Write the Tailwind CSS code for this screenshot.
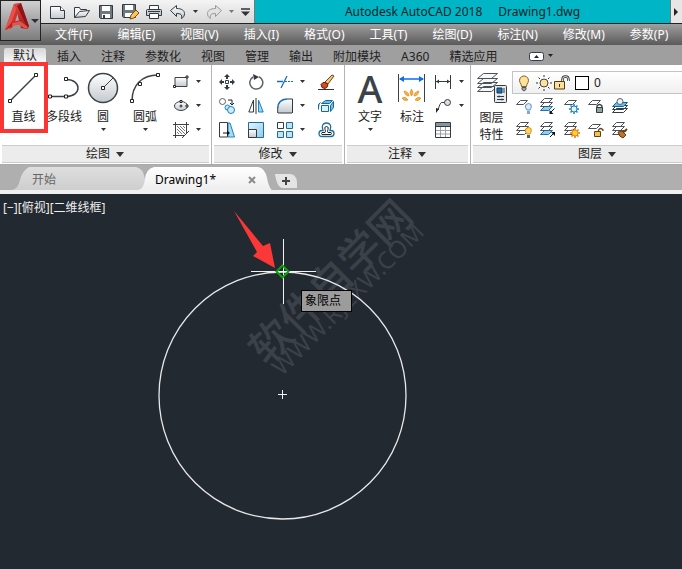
<!DOCTYPE html>
<html lang="zh-CN">
<head>
  <meta charset="UTF-8" />
  <meta name="viewport" content="width=device-width, initial-scale=1.0" />
  <title>Autodesk AutoCAD 2018 - Drawing1.dwg</title>
  <script src="https://cdn.jsdelivr.net/npm/@tailwindcss/browser@4"></script>
</head>
<body class="min-h-screen flex flex-col overflow-x-hidden bg-[#222930] font-['Noto_Sans','Noto_Sans_CJK_SC',sans-serif] text-xs leading-4 text-[#222] whitespace-nowrap">
  <!-- Shared gradients -->
  <svg class="absolute w-0 h-0" aria-hidden="true">
    <defs>
      <linearGradient id="steel" x1="0" y1="0" x2="0" y2="1"><stop offset="0" stop-color="#fff" /><stop offset="1" stop-color="#c3c9cf" /></linearGradient>
      <linearGradient id="sky" x1="0" y1="0" x2="1" y2="1"><stop offset="0" stop-color="#e4f5fc" /><stop offset="1" stop-color="#8ecbe8" /></linearGradient>
      <linearGradient id="red" x1="0" y1="0" x2="0" y2="1"><stop offset="0" stop-color="#e0453f" /><stop offset="1" stop-color="#a3181b" /></linearGradient>
      <linearGradient id="tab" x1="0" y1="0" x2="0" y2="1"><stop offset="0" stop-color="#dedede" /><stop offset="1" stop-color="#cecece" /></linearGradient>
      <linearGradient id="tabOn" x1="0" y1="0" x2="0" y2="1"><stop offset="0" stop-color="#fff" /><stop offset="1" stop-color="#eee" /></linearGradient>
    </defs>
  </svg>

  <!-- Title bar and menus -->
  <header class="flex h-[45px] bg-linear-to-b from-[#e8e8e8] from-50% via-[#9a9a9a] via-60% to-[#5c5c5c]">
    <button aria-label="应用程序菜单" class="w-[41px] h-[41px] shrink-0 flex items-center border border-[#222] bg-linear-to-b from-[#d0d0d0] to-[#7d7d7d]">
      <svg width="39" height="39" viewBox="0 0 39 39">
        <path d="M13 3l7-1-6 19-3 6-7 2z" fill="#d3322f" />
        <path d="M13 3L4 29l4-1 8-22z" fill="#e5524c" />
        <path d="M13 3l7-1 8 24-2 2-6-1-5-19z" fill="url(#red)" />
        <path d="M20 2l8 23-2 1L16 5z" fill="#8e1517" />
        <path d="M4 29l7-8 9-2 1 4-8 1z" fill="#b9211f" />
        <path d="M11 22l8-2 8 6-2 2-7-4-7 1z" fill="#e0524c" />
        <path d="M30 18h8l-4 4z" fill="#2b3138" />
      </svg>
    </button>
    <div class="flex-1 min-w-0 flex flex-col">
      <div class="flex h-6 border-b border-[#222] bg-[#00b6c6]">
        <div class="flex items-center w-[214px] shrink-0 border-r border-[#777] bg-linear-to-b from-[#f4f4f4] to-[#d8d8d8] pl-2">
          <button aria-label="新建" class="w-6"><svg width="18" height="16" viewBox="0 0 18 16"><path d="M1.500 2.500h10l4 4v8h-14z" fill="url(#steel)" stroke="#333b42" /><path d="M11.500 2.500v4h4" fill="#fff" stroke="#333b42" /></svg></button>
          <button aria-label="打开" class="w-6"><svg width="18" height="16" viewBox="0 0 18 16"><path d="M1.500 13.500v-10h5l1 2h6v3" fill="#f6f6f6" stroke="#333b42" /><path d="M1.500 13.500l5-6 10-1-4 6z" fill="url(#steel)" stroke="#333b42" /></svg></button>
          <button aria-label="保存" class="w-6"><svg width="18" height="16" viewBox="0 0 18 16"><path d="M2.500 1.500h13v13h-12l-1-1z" fill="#6d7880" stroke="#333b42" /><path d="M5 2h8v5H5z" fill="#fff" /><path d="M5 10h8v4H5z" fill="#fff" /><path d="M6 11h2v3H6z" fill="#333b42" /></svg></button>
          <button aria-label="另存为" class="w-6"><svg width="18" height="17" viewBox="0 0 18 17"><path d="M1.500 1.500h13v13h-12l-1-1z" fill="#6d7880" stroke="#333b42" /><path d="M4 2h8v5H4zM4 10h8v4H4z" fill="#fff" /><path d="M9 16l1-4 5-5 3 3-5 5z" fill="#ffc44a" stroke="#7a4a18" /></svg></button>
          <button aria-label="打印" class="w-6"><svg width="18" height="16" viewBox="0 0 18 16"><path d="M4.500 6v-4.500h9V6" fill="#fff" stroke="#333b42" /><path d="M1.500 6.500q0-1 1-1h13q1 0 1 1v5h-15z" fill="#c8ced3" stroke="#333b42" /><path d="M4.500 9.500h9v5h-9z" fill="#fff" stroke="#333b42" /><path d="M3 7.500h12" stroke="#333b42" /></svg></button>
          <button aria-label="放弃" class="w-6"><svg width="18" height="16" viewBox="0 0 18 16"><path d="M1.500 6.500l6-5v3c5 0 8 2 8 5 0 2-1 4-3 5 1-4-1-5-5-5v3z" fill="url(#steel)" stroke="#333b42" /></svg></button>
          <button aria-label="放弃列表" class="w-3"><svg width="5" height="4"><path d="M0 0h5L2.500 3z" fill="#333" /></svg></button>
          <button aria-label="重做" class="w-6"><svg width="18" height="16" viewBox="0 0 18 16"><path d="M16.500 6.500l-6-5v3c-5 0-8 2-8 5 0 2 1 4 3 5-1-4 1-5 5-5v3z" fill="#e2e2e2" stroke="#999" /></svg></button>
          <button aria-label="重做列表" class="w-3"><svg width="5" height="4"><path d="M0 0h5L2.500 3z" fill="#777" /></svg></button>
          <button aria-label="自定义"><svg width="9" height="8"><path d="M0 1h9" stroke="#333" stroke-width="1.500" /><path d="M0 3.500h9L4.500 8z" fill="#333" /></svg></button>
        </div>
        <h1 class="flex-1 flex justify-center items-center gap-4 text-xs text-[#0d1f24]"><span>Autodesk AutoCAD 2018</span><span>Drawing1.dwg</span></h1>
        <button aria-label="更多" class="w-3 flex items-center justify-center border-l border-[#777] bg-[#e6e6e6]"><svg width="5" height="8"><path d="M0 0l4 4-4 4z" fill="#222" /></svg></button>
      </div>
      <nav class="flex items-center gap-[25px] h-[21px] pl-[14px] bg-linear-to-b from-[#a0a0a0] to-[#5a5a5a] text-white">
        <a href="#">文件(F)</a>
        <a href="#">编辑(E)</a>
        <a href="#">视图(V)</a>
        <a href="#">插入(I)</a>
        <a href="#">格式(O)</a>
        <a href="#">工具(T)</a>
        <a href="#">绘图(D)</a>
        <a href="#">标注(N)</a>
        <a href="#">修改(M)</a>
        <a href="#">参数(P)</a>
      </nav>
    </div>
  </header>

  <!-- Ribbon tabs -->
  <nav class="flex items-end h-5 gap-5 bg-[#9f9f9f] pl-1">
    <a href="#" class="w-[42px] h-[17px] -mr-[9px] rounded-t-xs bg-linear-to-b from-[#d6d6d6] to-white text-center">默认</a>
    <a href="#">插入</a>
    <a href="#">注释</a>
    <a href="#">参数化</a>
    <a href="#">视图</a>
    <a href="#">管理</a>
    <a href="#">输出</a>
    <a href="#">附加模块</a>
    <a href="#">A360</a>
    <a href="#">精选应用</a>
    <button aria-label="最小化功能区" class="flex items-center gap-1 h-[18px] ml-3">
      <svg width="15" height="9" viewBox="0 0 15 9"><rect x=".5" y=".5" width="14" height="8" rx="2" fill="#fff" stroke="#333b55" /><path d="M5 6h5L7.500 3z" fill="#222" /></svg>
      <svg width="5" height="4"><path d="M0 0h5L2.500 3z" fill="#222" /></svg>
    </button>
  </nav>

  <!-- Ribbon -->
  <main class="flex-1 flex flex-col">
    <div class="flex h-[100px] bg-white border-b border-[#aaa]">
      <!-- Draw -->
      <section class="w-[212px] shrink-0 flex flex-col border-r border-[#b4b4b4]">
        <div class="flex h-20">
          <button class="relative w-[47px] shrink-0 flex flex-col items-center pt-[7px] z-10">
            <span class="absolute left-0 -top-[3px] w-12 h-[71px] border-4 border-[#fb3434] bg-white"></span>
            <svg class="relative" width="32" height="32" viewBox="0 0 32 32"><path d="M2 29L28 3" stroke="#3b4248" stroke-width="1.500" /><path d="M.5 27.500h3v3h-3zM26.500 1.500h3v3h-3z" fill="#fff" stroke="#222" /></svg>
            <span class="relative mt-[5px]">直线</span>
          </button>
          <button class="w-[34px] shrink-0 flex flex-col items-center pt-[7px]">
            <svg width="32" height="32" viewBox="0 0 32 32"><path d="M2 24.500h16c16 0 16-17 0-17" fill="none" stroke="#3b4248" stroke-width="1.500" /><path d="M.5 23h3v3h-3zM16.500 23h3v3h-3zM16.500 5.500h3v3h-3z" fill="#fff" stroke="#222" /></svg>
            <span class="mt-[5px]">多段线</span>
          </button>
          <button class="w-11 shrink-0 flex flex-col items-center pt-[7px]">
            <svg width="32" height="32" viewBox="0 0 32 32"><circle cx="16" cy="16" r="14.500" fill="url(#steel)" stroke="#3b4248" stroke-width="1.500" /><path d="M16 16L26 6" stroke="#3b4248" /><path d="M14.500 14.500h3v3h-3z" fill="#fff" stroke="#222" /></svg>
            <span class="mt-[5px]">圆</span>
            <svg class="mt-[3px]" width="5" height="4"><path d="M0 0h5L2.500 3z" fill="#333" /></svg>
          </button>
          <button class="w-10 shrink-0 flex flex-col items-center pt-[7px]">
            <svg width="32" height="32" viewBox="0 0 32 32"><path d="M3 29C3 13 13 3 29 3" fill="none" stroke="#3b4248" stroke-width="1.500" /><path d="M1.500 27.500h3v3h-3zM9.500 10.500h3v3h-3zM27.500 1.500h3v3h-3z" fill="#fff" stroke="#222" /></svg>
            <span class="mt-[5px]">圆弧</span>
            <svg class="mt-[3px]" width="5" height="4"><path d="M0 0h5L2.500 3z" fill="#333" /></svg>
          </button>
          <div class="grid grid-cols-[16px_5px] auto-rows-[24px] gap-x-[7px] items-center pt-[5px] pl-2">
            <button aria-label="矩形"><svg width="16" height="16" viewBox="0 0 16 16"><path d="M2 3.500h12v9H2z" fill="url(#steel)" stroke="#3b4248" /><path d="M.5 11.500h2v2h-2zM13 2h2v2h-2z" fill="#fff" stroke="#222" /></svg></button>
            <svg width="5" height="4"><path d="M0 0h5L2.500 3z" fill="#333" /></svg>
            <button aria-label="椭圆"><svg width="16" height="16" viewBox="0 0 16 16"><ellipse cx="8" cy="8" rx="6.500" ry="4.500" fill="url(#steel)" stroke="#3b4248" /><path d="M6.500 8h3M8 6.500v3" stroke="#222" /><path d="M7 2.500h2v2H7zM13 7h2v2h-2z" fill="#fff" stroke="#222" /></svg></button>
            <svg width="5" height="4"><path d="M0 0h5L2.500 3z" fill="#333" /></svg>
            <button aria-label="图案填充"><svg width="16" height="16" viewBox="0 0 16 16"><path d="M0 2.500h16M0 13.500h12M2.500 0v16M13.500 0v12M9 16l7-7" stroke="#3b4248" /><path d="M4 4l8 8M7 4l5 5M4 7l5 5M10 4l2 2M4 10l2 2" stroke="#777" /></svg></button>
            <svg width="5" height="4"><path d="M0 0h5L2.500 3z" fill="#333" /></svg>
          </div>
        </div>
        <button class="flex items-center justify-center gap-[6px] h-[18px] mx-[2px] border-y border-[#ccc] bg-[#ececec]">绘图 <svg width="9" height="5"><path d="M0 0h8L4 5z" fill="#333" /></svg></button>
      </section>

      <!-- Modify -->
      <section class="w-[133px] shrink-0 flex flex-col border-r border-[#b4b4b4]">
        <div class="h-20 grid grid-cols-[29px_29px_23px_18px_18px] auto-rows-[24px] items-center content-start pl-[7px] pt-[5px]">
          <button aria-label="移动"><svg width="16" height="16" viewBox="0 0 16 16"><path d="M8 0l3 3H9v2H7V3H5zM8 16l3-3H9v-2H7v2H5zM0 8l3-3v2h2v2H3v2zM16 8l-3-3v2h-2v2h2v2z" fill="#333b42" /><path d="M6.500 6.500h3v3h-3z" fill="#fff" stroke="#333b42" /></svg></button>
          <button aria-label="旋转"><svg width="16" height="16" viewBox="0 0 16 16"><path d="M5 3a6.500 6.500 0 1 0 6-.3" fill="none" stroke="#59636b" stroke-width="1.500" /><path d="M5 0l6 3-5 3z" fill="#333b42" /></svg></button>
          <button aria-label="修剪"><svg width="17" height="16" viewBox="0 0 17 16"><path d="M0 7.500h6M4 14L10 2" stroke="#1870b0" stroke-width="1.300" fill="none" /><path d="M8 7.500h2M11 7.500h2M14 7.500h2" stroke="#1870b0" /></svg></button>
          <svg width="5" height="4"><path d="M0 0h5L2.500 3z" fill="#333" /></svg>
          <button aria-label="删除"><svg width="17" height="16" viewBox="0 0 17 16"><path d="M0 15.500h16" stroke="#333" /><path d="M7 8l7-7 2 1-6 8z" fill="#f0c878" stroke="#6e4720" /><path d="M3 10.500q2-3 4-2l3 2q0 3-3 4-4 0-4-4z" fill="#cf4d24" stroke="#6a1d0a" /></svg></button>
          <button aria-label="复制"><svg width="16" height="16" viewBox="0 0 16 16"><circle cx="3.500" cy="3.500" r="3" fill="#fff" stroke="#59636b" /><path d="M9 2h4v4M11 5l2 2 2-2" fill="none" stroke="#222" /><circle cx="8.500" cy="9.500" r="2.500" fill="#cfe9f6" stroke="#1b83bd" /><circle cx="12" cy="12" r="3.500" fill="#cfe9f6" stroke="#1b83bd" /></svg></button>
          <button aria-label="镜像"><svg width="16" height="16" viewBox="0 0 16 16"><path d="M5.500 2v12H.8z" fill="#fff" stroke="#333b42" /><path d="M8 0v16" stroke="#333" /><path d="M10.500 2v12h4.700z" fill="#9fd3ee" stroke="#1b83bd" /></svg></button>
          <button aria-label="圆角"><svg width="17" height="16" viewBox="0 0 17 16"><path d="M1 15V9q1-7 9-8h5v14z" fill="url(#steel)" /><path d="M.7 15V9M15.500 15V1H10" fill="none" stroke="#333b42" /><path d="M.8 10Q1 1.500 10 1" fill="none" stroke="#1870b0" stroke-width="1.500" /><path d="M1 15h14" stroke="#333b42" /></svg></button>
          <svg width="5" height="4"><path d="M0 0h5L2.500 3z" fill="#333" /></svg>
          <button aria-label="分解"><svg width="17" height="16" viewBox="0 0 17 16"><path d="M3.500 7.500h7v6h-7z" fill="#d9f1fb" stroke="#146a9c" /><path d="M3.500 5.500l4-3h7l-3 3zM12.500 7.500l3-4v6l-3 4zM.5 11.500v-5l2-2" fill="#6fc0e6" stroke="#146a9c" /></svg></button>
          <button aria-label="拉伸"><svg width="16" height="16" viewBox="0 0 16 16"><path d="M9 1l2 0 4.500 14H9z" fill="#a9dcf2" stroke="#1b83bd" /><path d="M.5.5h8v14.500h-8z" fill="#fff" stroke="#333b42" /><path d="M4 11h5" stroke="#111" /><path d="M8 8.500l3 2.500-3 2.500z" fill="#111" /></svg></button>
          <button aria-label="缩放"><svg width="16" height="16" viewBox="0 0 16 16"><path d="M.5.5h15v15H.5z" fill="url(#sky)" stroke="#1b6f9f" /><path d="M.5 7.500h8v8h-8z" fill="url(#steel)" stroke="#333b42" /></svg></button>
          <button aria-label="阵列"><svg width="17" height="16" viewBox="0 0 17 16"><path d="M.5.5h6v6h-6z" fill="#fff" stroke="#333b42" /><path d="M9.500.5h6v6h-6zM.5 9.500h6v6h-6zM9.500 9.500h6v6h-6z" fill="#bfe4f5" stroke="#1b6f9f" /></svg></button>
          <svg width="5" height="4"><path d="M0 0h5L2.500 3z" fill="#333" /></svg>
          <button aria-label="偏移"><svg width="17" height="16" viewBox="0 0 17 16"><path d="M5 8.500C3 4 5 1 8.500 1S14 4 12 8.500h1q3 0 3 3t-3 3H4q-3 0-3-3t3-3z" fill="#fff" stroke="#1b6f9f" stroke-width="1.300" /><path d="M7 10.500q1-1 0-3-1-3 1.500-3t1.500 3q-1 2 0 3h3q1 1 0 2H4q-1-1 0-2z" fill="none" stroke="#222" /></svg></button>
        </div>
        <button class="flex items-center justify-center gap-[6px] h-[18px] mx-[2px] border-y border-[#ccc] bg-[#ececec]">修改 <svg width="9" height="5"><path d="M0 0h8L4 5z" fill="#333" /></svg></button>
      </section>

      <!-- Annotate -->
      <section class="w-[126px] shrink-0 flex flex-col border-r border-[#b4b4b4]">
        <div class="flex h-20 pl-1">
          <button class="w-[42px] flex flex-col items-center pt-[7px]">
            <span class="h-8 text-[38px] leading-8 font-medium text-[#3b4248]" aria-hidden="true">A</span>
            <span class="mt-[5px]">文字</span>
            <svg class="mt-[3px]" width="5" height="4"><path d="M0 0h5L2.500 3z" fill="#333" /></svg>
          </button>
          <button class="w-[42px] flex flex-col items-center pt-[7px]">
            <svg width="32" height="32" viewBox="0 0 32 32"><path d="M2.500 2v28M28.500 2v28" stroke="#3b4248" /><path d="M4 7h23" stroke="#0b6df0" stroke-width="1.500" /><path d="M3 7l5-3v6zM28 7l-5-3v6z" fill="#0b6df0" /><path d="M15.500 17q3 4 0 7-3-3 0-7zM8 19q5 1 5 5-4 0-5-5zM23 19q-5 1-5 5 4 0 5-5zM6 26q4-2 6 2-4 2-6-2zM25 26q-4-2-6 2 4 2 6-2z" fill="#f5b53c" stroke="#e27e10" stroke-width=".6" /></svg>
            <span class="mt-[5px]">标注</span>
          </button>
          <div class="grid grid-cols-[16px_5px] auto-rows-[24px] items-center content-start gap-x-2 pl-[2px] pt-[5px]">
            <button aria-label="线性"><svg width="16" height="16" viewBox="0 0 16 16"><path d="M.5 1v14M15.500 1v14M1 7.500h14" stroke="#333b42" /><path d="M1 7.500l3-2v4zM15 7.500l-3-2v4z" fill="#333b42" /></svg></button>
            <svg width="5" height="4"><path d="M0 0h5L2.500 3z" fill="#333" /></svg>
            <button aria-label="引线"><svg width="16" height="16" viewBox="0 0 16 16"><circle cx="12.500" cy="4.500" r="3" fill="#dde1e4" stroke="#333b42" /><path d="M9.500 4.500h-3Q5 5 3 12" fill="none" stroke="#333b42" /><path d="M1 15V10l3 1z" fill="#222" /></svg></button>
            <svg width="5" height="4"><path d="M0 0h5L2.500 3z" fill="#333" /></svg>
            <button aria-label="表格"><svg width="16" height="16" viewBox="0 0 16 16"><path d="M.5.5h15v15H.5z" fill="#fff" stroke="#333b42" /><path d="M1 1h14v3H1z" fill="#8b949b" /><path d="M1 4.500h14" stroke="#333b42" /><path d="M5.500 5v10M10.500 5v10M1 8.500h14M1 12h14" stroke="#9aa1a7" /></svg></button>
          </div>
        </div>
        <button class="flex items-center justify-center gap-[6px] h-[18px] mx-[2px] border-y border-[#ccc] bg-[#ececec]">注释 <svg width="9" height="5"><path d="M0 0h8L4 5z" fill="#333" /></svg></button>
      </section>

      <!-- Layers -->
      <section class="flex-1 min-w-0 flex flex-col">
        <div class="flex h-20">
          <button class="w-[41px] shrink-0 flex flex-col items-center pt-[7px]">
            <svg width="32" height="32" viewBox="0 0 32 32"><path d="M1.500 19.500l6-5h14l-6 5zM1.500 15.500l6-5h14l-6 5zM1.500 11.500l6-5h14l-6 5zM1.500 6.500l6-5h14l-6 5z" fill="#f7f8f9" stroke="#4a5258" /><rect x="18.500" y="13.500" width="12" height="17" rx="1" fill="#e6eaee" stroke="#333b42" /><path d="M21 16h5v5h-5z" fill="#1b6fb5" stroke="#17354c" /><path d="M28 16v5M21 24.500h7M21 27.500h7" stroke="#333b42" /><path d="M23 23.500v2M26 26.500v2" stroke="#333b42" /></svg>
            <span class="mt-[5px] leading-[17px]">图层<br />特性</span>
          </button>
          <div class="flex-1 min-w-0 flex flex-col pt-[6px]">
            <div class="flex items-center h-[23px] border border-r-0 border-[#c4c4c4] bg-linear-to-b from-white to-[#f0f0f0] pl-[3px]">
              <svg class="mr-1" width="16" height="18" viewBox="0 0 16 18"><path d="M5.500 12.500q0-2-1.500-4a4.500 4.500 0 1 1 8 0q-1.500 2-1.500 4z" fill="#ffe29a" stroke="#7c6332" /><path d="M6 13.500h4v2L8 17l-2-1.500z" fill="#9aa" stroke="#555" /></svg>
              <svg class="mr-[2px]" width="16" height="18" viewBox="0 0 16 18"><circle cx="8" cy="9" r="4" fill="#ffe29a" stroke="#444" /><path d="M8 1v2M8 15v2M0 9h2M14 9h2M2.500 3.500L4 5M12 13l1.500 1.500M13.500 3.500L12 5M4 13l-1.500 1.500" stroke="#333" /></svg>
              <svg class="mr-[5px]" width="16" height="18" viewBox="0 0 16 18"><path d="M8.500 8V5.500q0-3 3-3t3 3V7" fill="none" stroke="#333" stroke-width="2.500" /><path d="M8.500 8V5.500q0-3 3-3t3 3V7" fill="none" stroke="#eee" /><path d="M.5 7.500h10v7.500H.5z" fill="#ffdf92" stroke="#4a3c1c" /><path d="M5.500 10v3" stroke="#333" /></svg>
              <span class="w-[14px] h-[14px] border border-black bg-white mr-[5px]"></span>
              <select aria-label="图层" class="flex-1 appearance-none bg-transparent"><option>0</option></select>
            </div>
            <div class="grid grid-cols-[repeat(5,24px)] auto-rows-[24px] items-center pl-[3px]">
              <button aria-label="关"><svg width="18" height="18" viewBox="0 0 18 18"><path d="M1.500 7.500l4-4h7l-4 4z" fill="#fff" stroke="#4a5258" /><path d="M12 13q-3-3-1-5.500 3-2 5 0 1 3-1 5.500z" fill="#d9ecff" stroke="#5b8fd0" /><path d="M12 14h3v3h-3z" fill="#7da8d8" /></svg></button>
              <button aria-label="隔离"><svg width="18" height="18" viewBox="0 0 18 18"><path d="M1.500 13.500l4-4h8l-4 4z" fill="#8fd0ee" stroke="#1b6fb5" /><path d="M1.500 9.500l4-4h8l-4 4zM1.500 5.500l4-4h8l-4 4z" fill="#fff" stroke="#4a5258" /><path d="M15.500 11.500l-4 4" stroke="#111" /><path d="M10.500 13v4h4z" fill="#111" /></svg></button>
              <button aria-label="冻结"><svg width="18" height="18" viewBox="0 0 18 18"><path d="M1.500 7.500l4-4h8l-4 4z" fill="#fff" stroke="#4a5258" /><path d="M11 7v10M6 12h10M7.500 8.500l7 7M14.500 8.500l-7 7" stroke="#1b83c8" stroke-width="1.500" /><circle cx="11" cy="12" r="3" fill="#e5f5ff" stroke="#1b83c8" /></svg></button>
              <button aria-label="锁定"><svg width="18" height="18" viewBox="0 0 18 18"><path d="M1.500 7.500l4-4h8l-4 4z" fill="#fff" stroke="#4a5258" /><path d="M10 11V9q2.500-3 5 0v2" fill="none" stroke="#333b42" stroke-width="1.300" /><path d="M9.500 10.500h6v5h-6z" fill="#8ba79c" stroke="#333b42" /></svg></button>
              <button aria-label="置为当前"><svg width="18" height="18" viewBox="0 0 18 18"><path d="M1.500 15.500l4-4h11l-4 4zM1.500 12.500l4-4h11l-4 4z" fill="#fff" stroke="#333b42" /><path d="M1.500 9.500l4-4h11l-4 4z" fill="#67bdea" stroke="#0f5f9c" /><circle cx="9" cy="4.500" r="3" fill="#eef1f3" stroke="#59636b" /></svg></button>
              <button aria-label="打开所有图层"><svg width="18" height="18" viewBox="0 0 18 18"><path d="M1.500 13.500l4-4h8l-4 4zM1.500 9.500l4-4h8l-4 4zM1.500 5.500l4-4h8l-4 4z" fill="#fff" stroke="#4a5258" /><path d="M12 13q-3-3-1-5.500 3-2 5 0 1 3-1 5.500z" fill="#ffd75a" stroke="#e08a10" /><path d="M12 14h3v3h-3z" fill="#59636b" /></svg></button>
              <button aria-label="取消隔离"><svg width="18" height="18" viewBox="0 0 18 18"><path d="M1.500 13.500l4-4h8l-4 4z" fill="#8fd0ee" stroke="#1b6fb5" /><path d="M1.500 9.500l4-4h8l-4 4zM1.500 5.500l4-4h8l-4 4z" fill="#fff" stroke="#4a5258" /><path d="M11 16l4-4" stroke="#111" /><path d="M16 15v-4h-4z" fill="#111" /></svg></button>
              <button aria-label="解冻所有图层"><svg width="18" height="18" viewBox="0 0 18 18"><path d="M1.500 13.500l4-4h8l-4 4zM1.500 9.500l4-4h8l-4 4zM1.500 5.500l4-4h8l-4 4z" fill="#fff" stroke="#4a5258" /><path d="M12 7v10M7 12h10M8.500 8.500l7 7M15.500 8.500l-7 7" stroke="#e9700c" stroke-width="1.500" /><circle cx="12" cy="12" r="3" fill="#ffd43c" stroke="#f08a12" /></svg></button>
              <button aria-label="解锁"><svg width="18" height="18" viewBox="0 0 18 18"><path d="M1.500 7.500l4-4h8l-4 4z" fill="#fff" stroke="#4a5258" /><path d="M11.500 11V9q2-3 4.500 0v1" fill="none" stroke="#59431c" stroke-width="1.300" /><path d="M7.500 10.500h6v5h-6z" fill="#f5c04c" stroke="#59431c" /></svg></button>
              <button aria-label="匹配图层"><svg width="18" height="18" viewBox="0 0 18 18"><path d="M1.500 13.500l4-4h8l-4 4zM1.500 9.500l4-4h8l-4 4zM1.500 5.500l4-4h8l-4 4z" fill="#fff" stroke="#4a5258" /><path d="M16 8l-3 3" stroke="#6a3a12" stroke-width="2" /><path d="M7 11l4-1 4 4-3 3q-4-1-5-6z" fill="#c0702a" stroke="#6a3a12" /></svg></button>
            </div>
          </div>
        </div>
        <button class="flex items-center gap-[6px] h-[18px] ml-[2px] pl-[105px] border-y border-[#ccc] bg-[#ececec]">图层 <svg width="9" height="5"><path d="M0 0h8L4 5z" fill="#333" /></svg></button>
      </section>
    </div>

    <!-- Drawing tabs -->
    <div class="flex items-end h-[29px] bg-[#afafaf] border-b-4 border-[#efefef] pl-3">
      <button class="relative w-[134px] h-[23px] pl-5 pt-[2px] text-left text-[#666]">
        <svg class="absolute inset-0" width="134" height="23"><path d="M0 23Q6 22 8 13T17 0H124Q131 1 133 12L134 23z" fill="url(#tab)" /></svg>
        <span class="relative">开始</span>
      </button>
      <button class="relative w-[126px] h-[23px] -ml-2 pl-[17px] pt-[2px] flex items-center gap-8 text-black">
        <svg class="absolute inset-0" width="134" height="23"><path d="M0 23Q6 22 7 12T16 0H120Q127 1 129 11T134 23z" fill="url(#tabOn)" /></svg>
        <span class="relative">Drawing1*</span>
        <svg class="relative shrink-0" width="8" height="8"><path d="M1 1l6 6M7 1L1 7" stroke="#8a8a8a" stroke-width="2" /></svg>
      </button>
      <button aria-label="新图形" class="ml-[11px] h-[19px]"><svg width="23" height="16"><path d="M0 1h15q6 0 7 8v6H8Q2 15 0 1z" fill="#e4e4e4" /><path d="M7 8h8M11 4v8" stroke="#444" stroke-width="2" /></svg></button>
    </div>

    <!-- Model space -->
    <div class="relative flex-1 min-h-[375px] bg-[#222930] text-[#eee]">
      <svg class="absolute inset-0 w-full h-full">
        <g fill="#3b4148">
          <text x="267" y="173" font-size="42" font-weight="500" transform="rotate(-45 267 173)">软件自学网</text>
          <text x="282" y="183" font-size="24" transform="rotate(-45 282 183)">WWW.RJZXW.COM</text>
        </g>
        <circle cx="282.500" cy="201.500" r="123.500" fill="none" stroke="#e8e8e8" stroke-width="1.300" />
        <path d="M278 200.500h9M282.500 196v9M251 77.500h65M283.500 45v65" stroke="#f2f2f2" />
        <path d="M282.500 71.500l6 6-6 6-6-6z" fill="none" stroke="#0da10d" stroke-width="2" />
        <path d="M234 17l29 35 7-3 5 25-22-12 4-4z" fill="#fb3838" />
      </svg>
      <p class="relative pl-[3px] pt-[6px]">[−][俯视][二维线框]</p>
      <div class="absolute left-[301px] top-[96px] w-[51px] h-[22px] pl-[3px] pt-[2px] border border-black bg-[#9c9c9c] text-black">象限点</div>
    </div>
  </main>
</body>
</html>
